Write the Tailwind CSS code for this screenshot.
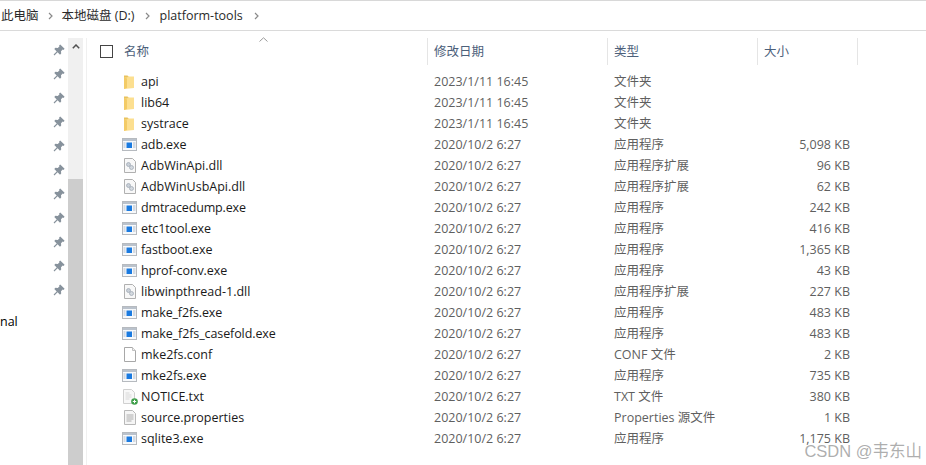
<!doctype html>
<html lang="zh-CN">
<head>
<meta charset="utf-8">
<script src="https://cdn.jsdelivr.net/npm/@tailwindcss/browser@4"></script>
<title>platform-tools</title>
</head>
<body class="bg-white">
<svg width="0" height="0" class="absolute">
<defs>
<symbol id="pin" viewBox="0 0 12 12"><path d="M7.2 .4 11.6 4.8 10.5 5.9 9.7 5.5 8 7.2 8.2 9.6 7 10.7 4.6 8.3 1.4 11.4 .6 10.6 3.7 7.4 1.3 5 2.4 3.8 4.8 4 6.5 2.3 6.1 1.5Z" fill="#87929c"/></symbol>
<symbol id="folder" viewBox="0 0 12 16"><path d="M1 1.5h3.5l1.5 1.5h5v11H1Z" fill="#e8c25e"/><path d="M1 15 1.5 3.5H4l1-1h6v11.5Z" fill="#fcdf90"/><path d="M1 15V3l3 1.5V14Z" fill="#f3cb66"/></symbol>
<symbol id="exe" viewBox="0 0 15 13"><rect x=".5" y=".5" width="14" height="12" fill="#f7f9fb" stroke="#b6babf"/><rect x="1" y="1" width="13" height="2" fill="#bac2cc"/><rect x="4.5" y="4.5" width="5.5" height="5.5" fill="#1a7ae0"/><path d="M1.5 5h2M1.5 7h2M1.5 9h2M11 5h2.5M11 7h2.5M11 9h2.5" stroke="#b2bcc9"/></symbol>
<symbol id="dll" viewBox="0 0 12 15"><path d="M.5.5h8l3 3v11H.5Z" fill="#f8f8f8" stroke="#b0b0b0"/><circle cx="4.5" cy="6.5" r="2" fill="#c9d0d8" stroke="#9ba5b0" stroke-width=".7"/><circle cx="7.5" cy="9.5" r="2" fill="#d3d9df" stroke="#9ba5b0" stroke-width=".7"/></symbol>
<symbol id="blank" viewBox="0 0 12 15"><path d="M.5.5h8l3 3v11H.5Z" fill="#fff" stroke="#a8a8a8"/><path d="M8.5.5v3h3" fill="#f0f0f0" stroke="#c0c0c0"/></symbol>
<symbol id="txt" viewBox="0 0 15 16"><path d="M.5.5h8l3 3v11H.5Z" fill="#f8f8f8" stroke="#d0d0d0"/><path d="M2.5 4h4M2.5 6h6M2.5 8h6M2.5 10h4" stroke="#d8d8d8"/><circle cx="11.5" cy="12.5" r="3.3" fill="#3f9f4a"/><path d="M9.8 12.5h3.4M11.5 10.8v3.4" stroke="#fff"/></symbol>
<symbol id="prop" viewBox="0 0 12 15"><path d="M.5.5h8l3 3v11H.5Z" fill="#f5f5f5" stroke="#b8b8b8"/><path d="M2.5 5h7M2.5 7h7M2.5 9h7M2.5 11h5" stroke="#adadad"/></symbol>
</defs>
</svg>
<div class="relative w-[926px] h-[465px] overflow-hidden bg-white text-[12.5px] leading-[21px] text-[#1a1a1a]" style="font-family:'Open Sans','Noto Sans CJK SC',sans-serif">

  <nav class="h-[31px] border-t border-b border-t-[#d8d8d8] border-b-[#dadada] flex items-center text-[#2a2a2a]">
    <span class="ml-[1px]">此电脑</span>
    <svg class="w-[5px] h-[8px] mx-[9px]" viewBox="0 0 5 8"><path d="M1 1l3 3-3 3" fill="none" stroke="#8a8a8a" stroke-width="1.2"/></svg>
    <span>本地磁盘 (D:)</span>
    <svg class="w-[5px] h-[8px] mx-[10px]" viewBox="0 0 5 8"><path d="M1 1l3 3-3 3" fill="none" stroke="#8a8a8a" stroke-width="1.2"/></svg>
    <span>platform-tools</span>
    <svg class="w-[5px] h-[8px] ml-[11px]" viewBox="0 0 5 8"><path d="M1 1l3 3-3 3" fill="none" stroke="#8a8a8a" stroke-width="1.2"/></svg>
  </nav>

  <div class="flex h-[434px] pt-[7px]">
    <aside class="w-[68px] shrink-0 flex flex-col items-end pr-[3px]">
      <svg class="w-[12px] h-[24px]"><use href="#pin" y="6" width="12" height="12"/></svg>
      <svg class="w-[12px] h-[24px]"><use href="#pin" y="6" width="12" height="12"/></svg>
      <svg class="w-[12px] h-[24px]"><use href="#pin" y="6" width="12" height="12"/></svg>
      <svg class="w-[12px] h-[24px]"><use href="#pin" y="6" width="12" height="12"/></svg>
      <svg class="w-[12px] h-[24px]"><use href="#pin" y="6" width="12" height="12"/></svg>
      <svg class="w-[12px] h-[24px]"><use href="#pin" y="6" width="12" height="12"/></svg>
      <svg class="w-[12px] h-[24px]"><use href="#pin" y="6" width="12" height="12"/></svg>
      <svg class="w-[12px] h-[24px]"><use href="#pin" y="6" width="12" height="12"/></svg>
      <svg class="w-[12px] h-[24px]"><use href="#pin" y="6" width="12" height="12"/></svg>
      <svg class="w-[12px] h-[24px]"><use href="#pin" y="6" width="12" height="12"/></svg>
      <svg class="w-[12px] h-[24px]"><use href="#pin" y="6" width="12" height="12"/></svg>
      <div class="self-start mt-[9px] text-black">nal</div>
    </aside>

    <div class="w-[15px] shrink-0 bg-[#f0f0f0] flex flex-col">
      <div class="h-[17px] flex items-center justify-center">
        <svg class="w-[8px] h-[5px]" viewBox="0 0 8 5"><path d="M.8 4.2 4 1l3.2 3.2" fill="none" stroke="#505050" stroke-width="1.5"/></svg>
      </div>
      <div class="mt-[124px] flex-1 bg-[#cdcdcd]"></div>
    </div>

    <main class="ml-[3px] flex-1 border-l border-[#f0f0f0] relative">
      <header class="h-[27px] flex items-center text-[#4c607a] relative">
        <div class="w-[341px] h-full shrink-0 flex items-center border-r border-[#e5e5e5]">
          <span class="ml-[13px] w-[13px] h-[13px] border border-[#444] bg-white shrink-0"></span>
          <span class="ml-[11px]">名称</span>
          <svg class="absolute left-[172px] -top-[1px] w-[9px] h-[5px]" viewBox="0 0 9 5"><path d="M.5 4.5 4.5.8l4 3.7" fill="none" stroke="#9a9a9a"/></svg>
        </div>
        <div class="w-[180px] h-full shrink-0 flex items-center pl-[6px] border-r border-[#e5e5e5]">修改日期</div>
        <div class="w-[150px] h-full shrink-0 flex items-center pl-[6px] border-r border-[#e5e5e5]">类型</div>
        <div class="w-[100px] h-full shrink-0 flex items-center pl-[6px] border-r border-[#e5e5e5]">大小</div>
      </header>

      <div class="mt-[6px] flex flex-col text-[#5f5f5f]">
        <div class="h-[21px] flex items-center"><svg class="ml-[36px] w-[12px] h-[16px] shrink-0"><use href="#folder"/></svg><span class="ml-[6px] w-[293px] text-[#1a1a1a]">api</span><span class="w-[180px]">2023/1/11 16:45</span><span class="w-[150px]">文件夹</span><span class="w-[86px] text-right"></span></div>
        <div class="h-[21px] flex items-center"><svg class="ml-[36px] w-[12px] h-[16px] shrink-0"><use href="#folder"/></svg><span class="ml-[6px] w-[293px] text-[#1a1a1a]">lib64</span><span class="w-[180px]">2023/1/11 16:45</span><span class="w-[150px]">文件夹</span><span class="w-[86px] text-right"></span></div>
        <div class="h-[21px] flex items-center"><svg class="ml-[36px] w-[12px] h-[16px] shrink-0"><use href="#folder"/></svg><span class="ml-[6px] w-[293px] text-[#1a1a1a]">systrace</span><span class="w-[180px]">2023/1/11 16:45</span><span class="w-[150px]">文件夹</span><span class="w-[86px] text-right"></span></div>
        <div class="h-[21px] flex items-center"><svg class="ml-[35px] w-[15px] h-[13px] shrink-0"><use href="#exe"/></svg><span class="ml-[4px] w-[293px] text-[#1a1a1a] tracking-[-0.1px]">adb.exe</span><span class="w-[180px]">2020/10/2 6:27</span><span class="w-[150px]">应用程序</span><span class="w-[86px] text-right">5,098 KB</span></div>
        <div class="h-[21px] flex items-center"><svg class="ml-[37px] w-[12px] h-[15px] shrink-0"><use href="#dll"/></svg><span class="ml-[5px] w-[293px] text-[#1a1a1a]">AdbWinApi.dll</span><span class="w-[180px]">2020/10/2 6:27</span><span class="w-[150px]">应用程序扩展</span><span class="w-[86px] text-right">96 KB</span></div>
        <div class="h-[21px] flex items-center"><svg class="ml-[37px] w-[12px] h-[15px] shrink-0"><use href="#dll"/></svg><span class="ml-[5px] w-[293px] text-[#1a1a1a]">AdbWinUsbApi.dll</span><span class="w-[180px]">2020/10/2 6:27</span><span class="w-[150px]">应用程序扩展</span><span class="w-[86px] text-right">62 KB</span></div>
        <div class="h-[21px] flex items-center"><svg class="ml-[35px] w-[15px] h-[13px] shrink-0"><use href="#exe"/></svg><span class="ml-[4px] w-[293px] text-[#1a1a1a] tracking-[-0.15px]">dmtracedump.exe</span><span class="w-[180px]">2020/10/2 6:27</span><span class="w-[150px]">应用程序</span><span class="w-[86px] text-right">242 KB</span></div>
        <div class="h-[21px] flex items-center"><svg class="ml-[35px] w-[15px] h-[13px] shrink-0"><use href="#exe"/></svg><span class="ml-[4px] w-[293px] text-[#1a1a1a] tracking-[-0.1px]">etc1tool.exe</span><span class="w-[180px]">2020/10/2 6:27</span><span class="w-[150px]">应用程序</span><span class="w-[86px] text-right">416 KB</span></div>
        <div class="h-[21px] flex items-center"><svg class="ml-[35px] w-[15px] h-[13px] shrink-0"><use href="#exe"/></svg><span class="ml-[4px] w-[293px] text-[#1a1a1a] tracking-[-0.1px]">fastboot.exe</span><span class="w-[180px]">2020/10/2 6:27</span><span class="w-[150px]">应用程序</span><span class="w-[86px] text-right">1,365 KB</span></div>
        <div class="h-[21px] flex items-center"><svg class="ml-[35px] w-[15px] h-[13px] shrink-0"><use href="#exe"/></svg><span class="ml-[4px] w-[293px] text-[#1a1a1a] tracking-[-0.1px]">hprof-conv.exe</span><span class="w-[180px]">2020/10/2 6:27</span><span class="w-[150px]">应用程序</span><span class="w-[86px] text-right">43 KB</span></div>
        <div class="h-[21px] flex items-center"><svg class="ml-[37px] w-[12px] h-[15px] shrink-0"><use href="#dll"/></svg><span class="ml-[5px] w-[293px] text-[#1a1a1a]">libwinpthread-1.dll</span><span class="w-[180px]">2020/10/2 6:27</span><span class="w-[150px]">应用程序扩展</span><span class="w-[86px] text-right">227 KB</span></div>
        <div class="h-[21px] flex items-center"><svg class="ml-[35px] w-[15px] h-[13px] shrink-0"><use href="#exe"/></svg><span class="ml-[4px] w-[293px] text-[#1a1a1a] tracking-[-0.15px]">make_f2fs.exe</span><span class="w-[180px]">2020/10/2 6:27</span><span class="w-[150px]">应用程序</span><span class="w-[86px] text-right">483 KB</span></div>
        <div class="h-[21px] flex items-center"><svg class="ml-[35px] w-[15px] h-[13px] shrink-0"><use href="#exe"/></svg><span class="ml-[4px] w-[293px] text-[#1a1a1a] tracking-[-0.1px]">make_f2fs_casefold.exe</span><span class="w-[180px]">2020/10/2 6:27</span><span class="w-[150px]">应用程序</span><span class="w-[86px] text-right">483 KB</span></div>
        <div class="h-[21px] flex items-center"><svg class="ml-[37px] w-[12px] h-[15px] shrink-0"><use href="#blank"/></svg><span class="ml-[5px] w-[293px] text-[#1a1a1a]">mke2fs.conf</span><span class="w-[180px]">2020/10/2 6:27</span><span class="w-[150px]">CONF 文件</span><span class="w-[86px] text-right">2 KB</span></div>
        <div class="h-[21px] flex items-center"><svg class="ml-[35px] w-[15px] h-[13px] shrink-0"><use href="#exe"/></svg><span class="ml-[4px] w-[293px] text-[#1a1a1a] tracking-[-0.1px]">mke2fs.exe</span><span class="w-[180px]">2020/10/2 6:27</span><span class="w-[150px]">应用程序</span><span class="w-[86px] text-right">735 KB</span></div>
        <div class="h-[21px] flex items-center"><svg class="ml-[36px] w-[15px] h-[16px] shrink-0"><use href="#txt"/></svg><span class="ml-[3px] w-[293px] text-[#1a1a1a]">NOTICE.txt</span><span class="w-[180px]">2020/10/2 6:27</span><span class="w-[150px]">TXT 文件</span><span class="w-[86px] text-right">380 KB</span></div>
        <div class="h-[21px] flex items-center"><svg class="ml-[37px] w-[12px] h-[15px] shrink-0"><use href="#prop"/></svg><span class="ml-[5px] w-[293px] text-[#1a1a1a]">source.properties</span><span class="w-[180px]">2020/10/2 6:27</span><span class="w-[150px]">Properties 源文件</span><span class="w-[86px] text-right">1 KB</span></div>
        <div class="h-[21px] flex items-center"><svg class="ml-[35px] w-[15px] h-[13px] shrink-0"><use href="#exe"/></svg><span class="ml-[4px] w-[293px] text-[#1a1a1a]">sqlite3.exe</span><span class="w-[180px]">2020/10/2 6:27</span><span class="w-[150px]">应用程序</span><span class="w-[86px] text-right">1,175 KB</span></div>
      </div>
    </main>
  </div>

  <div class="absolute right-[4px] bottom-[4px] text-[16.5px] leading-[20px] text-[#a0a0a0]/85" style="font-family:'Liberation Sans','Noto Sans CJK SC',sans-serif">CSDN @韦东山</div>
</div>
</body>
</html>
